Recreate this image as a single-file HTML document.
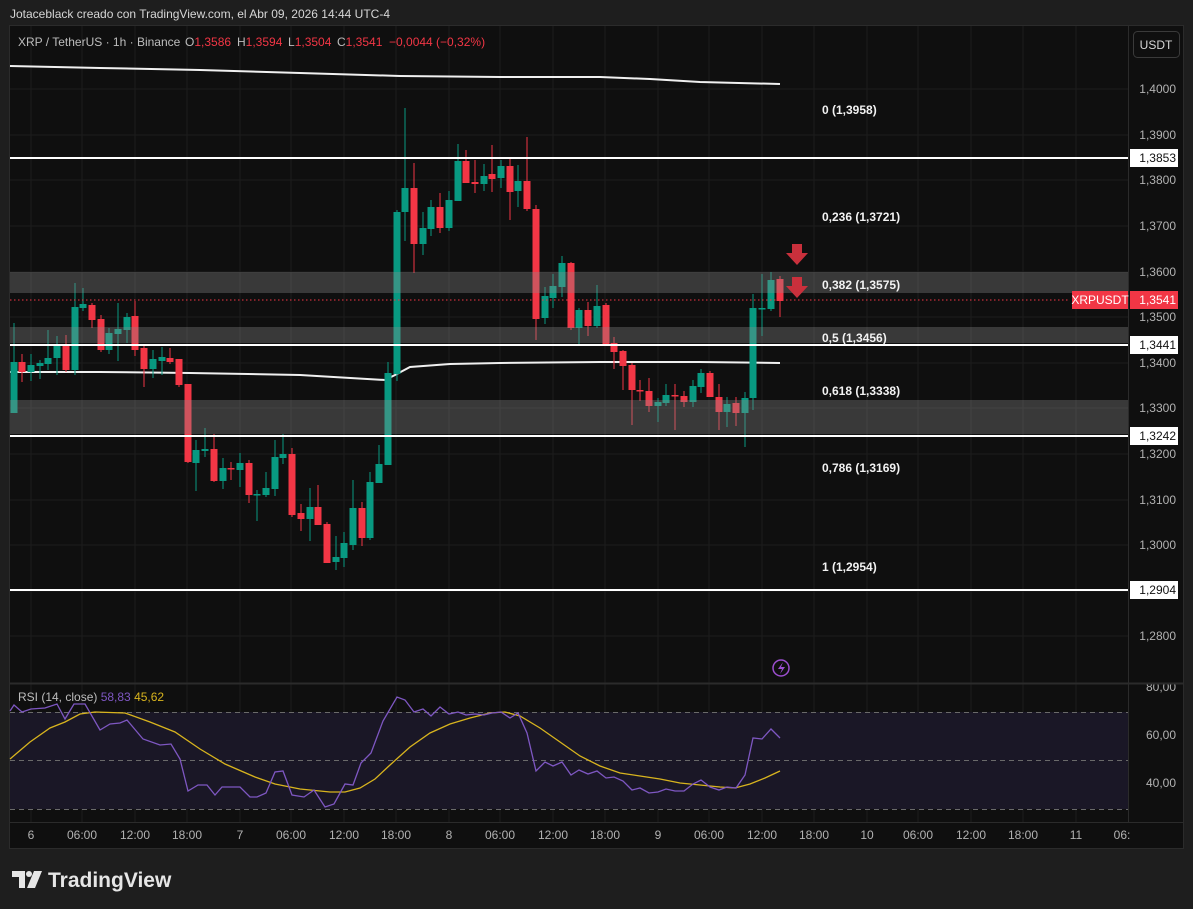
<!DOCTYPE html>
<html><head><meta charset="utf-8"><style>
html,body{margin:0;padding:0;background:#1e1e1e;width:1193px;height:909px;overflow:hidden}
svg{display:block}
text{font-family:"Liberation Sans",sans-serif}
</style></head><body>
<svg width="1193" height="909" viewBox="0 0 1193 909" xmlns="http://www.w3.org/2000/svg">
<rect width="1193" height="909" fill="#1e1e1e"/>
<text x="10" y="18" font-size="12" fill="#d6d6d6">Jotaceblack creado con TradingView.com, el Abr 09, 2026 14:44 UTC-4</text>
<rect x="9.5" y="25.5" width="1174" height="823" fill="#0f0f0f" stroke="#2b2b2b"/>
<g stroke="#1c1c1c" stroke-width="1">
<path d="M10 89H1128M10 135H1128M10 180H1128M10 226H1128M10 272H1128M10 317H1128M10 363H1128M10 408H1128M10 454H1128M10 500H1128M10 545H1128M10 591H1128M10 636H1128M10 735H1128M10 783H1128"/>
<path d="M31 26V822M82 26V822M135 26V822M187 26V822M240 26V822M291 26V822M344 26V822M396 26V822M449 26V822M500 26V822M553 26V822M605 26V822M658 26V822M709 26V822M762 26V822M814 26V822M867 26V822M918 26V822M971 26V822M1023 26V822M1076 26V822"/>
</g>
<path d="M10 66L100 68L200 70L300 73L400 76L500 77L600 77L650 79L700 82L780 84" stroke="#f0f0f0" stroke-width="2" fill="none"/>
<path d="M10 372L100 372L190 373L300 375L385 380L395 375L410 367L450 364L500 363L600 362L700 362L780 363" stroke="#f0f0f0" stroke-width="2" fill="none"/>
<g stroke="#089981" stroke-width="1" fill="none">
<path d="M14 323V413M31 354V381M40 360V379M48 330V370M57 336V375M75 283V375M83 288V311M109 328V354M118 303V361M127 313V343M153 350V378M162 347V375M196 440V491M205 428V457M223 458V489M240 453V487M257 490V521M266 472V497M275 440V496M283 434V464M310 488V541M336 536V570M344 532V567M353 480V550M370 472V540M379 445V483M388 362V465M397 210V381M405 108V241M423 212V255M431 200V236M449 191V231M458 144V201M484 164V191M501 160V188M518 165V207M545 287V324M553 274V308M562 256V297M579 308V345M597 285V328M658 398V422M666 384V406M693 380V407M701 369V393M727 397V427M745 392V447M753 294V410M762 274V336M771 272V311"/>
</g>
<path fill="#089981" d="M10.5 362h7v51h-7zM27.5 365h7v7h-7zM36.5 363h7v3h-7zM44.5 358h7v6h-7zM53.5 346h7v12h-7zM71.5 307h7v63h-7zM79.5 304h7v4h-7zM105.5 333h7v17h-7zM114.5 329h7v5h-7zM123.5 317h7v13h-7zM149.5 359h7v10h-7zM158.5 357h7v4h-7zM192.5 450h7v13h-7zM201.5 449h7v2h-7zM219.5 468h7v13h-7zM236.5 463h7v7h-7zM253.5 494h7v1.5h-7zM262.5 488h7v7h-7zM271.5 457h7v32h-7zM279.5 454h7v4h-7zM306.5 507h7v12h-7zM332.5 557h7v5h-7zM340.5 543h7v15h-7zM349.5 508h7v37h-7zM366.5 482h7v56h-7zM375.5 464h7v19h-7zM384.5 373h7v92h-7zM393.5 212h7v162h-7zM401.5 188h7v24h-7zM419.5 228h7v16h-7zM427.5 207h7v22h-7zM445.5 200h7v28h-7zM454.5 161h7v40h-7zM480.5 176h7v8h-7zM497.5 166h7v12h-7zM514.5 181h7v10h-7zM541.5 296h7v22h-7zM549.5 286h7v12h-7zM558.5 263h7v24h-7zM575.5 310h7v18h-7zM593.5 306h7v20h-7zM654.5 402h7v4h-7zM662.5 395h7v8h-7zM689.5 386h7v16h-7zM697.5 373h7v14h-7zM723.5 404h7v8h-7zM741.5 398h7v15h-7zM749.5 308h7v90h-7zM758.5 308h7v1.5h-7zM767.5 280h7v29h-7z"/>
<g stroke="#f23645" stroke-width="1" fill="none">
<path d="M22 354V382M66 335V372M92 303V328M101 315V352M135 301V356M144 346V387M170 348V364M179 359V387M188 384V463M214 434V482M231 462V480M249 460V503M292 448V517M301 504V531M318 485V525M327 522V563M362 502V546M414 163V273M440 193V233M466 150V183M475 160V193M492 145V192M510 159V220M527 137V211M536 205V340M571 262V330M588 302V336M606 303V344M614 337V369M623 350V390M632 363V425M640 380V401M649 378V412M675 384V430M684 391V407M710 371V397M719 384V430M736 397V426M780 276V317"/>
</g>
<path fill="#f23645" d="M18.5 362h7v10h-7zM62.5 346h7v24h-7zM88.5 305h7v15h-7zM97.5 319h7v31h-7zM131.5 316h7v34h-7zM140.5 348h7v21h-7zM166.5 358h7v4h-7zM175.5 359h7v26h-7zM184.5 384h7v78h-7zM210.5 449h7v32h-7zM227.5 468h7v1.5h-7zM245.5 463h7v32h-7zM288.5 454h7v61h-7zM297.5 513h7v6h-7zM314.5 507h7v18h-7zM323.5 524h7v39h-7zM358.5 508h7v30h-7zM410.5 188h7v56h-7zM436.5 207h7v21h-7zM462.5 161h7v22h-7zM471.5 182h7v2h-7zM488.5 174h7v5h-7zM506.5 166h7v26h-7zM523.5 181h7v28h-7zM532.5 209h7v110h-7zM567.5 263h7v65h-7zM584.5 310h7v16h-7zM602.5 305h7v39h-7zM610.5 343h7v9h-7zM619.5 351h7v15h-7zM628.5 365h7v25h-7zM636.5 390h7v1.5h-7zM645.5 391h7v15h-7zM671.5 395h7v1.5h-7zM680.5 396h7v6h-7zM706.5 373h7v24h-7zM715.5 397h7v15h-7zM732.5 403h7v10h-7zM776.5 279h7v22h-7z"/>
<g fill="rgba(140,140,140,0.34)">
<rect x="10" y="272" width="1118" height="21"/>
<rect x="10" y="327" width="1118" height="16"/>
<rect x="10" y="400" width="1118" height="34"/>
</g>
<g stroke="#ffffff" stroke-width="2">
<path d="M10 158H1128M10 345H1128M10 436H1128M10 590H1128"/>
</g>
<path d="M10 300H1070" stroke="#f23645" stroke-width="1" stroke-dasharray="1.5 2.5"/>
<g fill="#c9303c">
<path d="M792 244h10v9h6l-11 12l-11-12h6z"/>
<path d="M792 277h10v9h6l-11 12l-11-12h6z"/>
</g>
<g font-size="12" font-weight="bold" fill="#f2f2f2">
<text x="822" y="114">0 (1,3958)</text>
<text x="822" y="221">0,236 (1,3721)</text>
<text x="822" y="289">0,382 (1,3575)</text>
<text x="822" y="342">0,5 (1,3456)</text>
<text x="822" y="395">0,618 (1,3338)</text>
<text x="822" y="472">0,786 (1,3169)</text>
<text x="822" y="571">1 (1,2954)</text>
</g>
<text y="46" font-size="12" fill="#bdbdbd"><tspan x="18">XRP / TetherUS · 1h · Binance</tspan><tspan x="185">O</tspan><tspan fill="#f23645">1,3586</tspan><tspan x="237">H</tspan><tspan fill="#f23645">1,3594</tspan><tspan x="288">L</tspan><tspan fill="#f23645">1,3504</tspan><tspan x="337">C</tspan><tspan fill="#f23645">1,3541</tspan><tspan x="389" fill="#f23645">−0,0044 (−0,32%)</tspan></text>
<path d="M1128.5 26V822" stroke="#2b2b2b"/>
<rect x="1133.5" y="31.5" width="46" height="26" rx="4" fill="#0f0f0f" stroke="#3a3a3a"/>
<text x="1156" y="49" font-size="12" fill="#d6d6d6" text-anchor="middle">USDT</text>
<g font-size="12" fill="#b2b2b2" text-anchor="end">
<text x="1176" y="93">1,4000</text>
<text x="1176" y="139">1,3900</text>
<text x="1176" y="184">1,3800</text>
<text x="1176" y="230">1,3700</text>
<text x="1176" y="276">1,3600</text>
<text x="1176" y="321">1,3500</text>
<text x="1176" y="367">1,3400</text>
<text x="1176" y="412">1,3300</text>
<text x="1176" y="458">1,3200</text>
<text x="1176" y="504">1,3100</text>
<text x="1176" y="549">1,3000</text>
<text x="1176" y="640">1,2800</text>
<text x="1176" y="691">80,00</text>
<text x="1176" y="739">60,00</text>
<text x="1176" y="787">40,00</text>
</g>
<g fill="#ffffff">
<rect x="1130" y="149" width="48" height="18"/>
<rect x="1130" y="336" width="48" height="18"/>
<rect x="1130" y="427" width="48" height="18"/>
<rect x="1130" y="581" width="48" height="18"/>
</g>
<g font-size="12" fill="#111" text-anchor="end">
<text x="1176" y="162">1,3853</text>
<text x="1176" y="349">1,3441</text>
<text x="1176" y="440">1,3242</text>
<text x="1176" y="594">1,2904</text>
</g>
<rect x="1072" y="291" width="56" height="18" fill="#f23645"/>
<text x="1100" y="304" font-size="12" fill="#fff" text-anchor="middle">XRPUSDT</text>
<rect x="1130" y="291" width="48" height="18" fill="#f23645"/>
<text x="1176" y="304" font-size="12" fill="#fff" text-anchor="end">1,3541</text>
<circle cx="781" cy="668" r="8" fill="none" stroke="#9c4fd0" stroke-width="1.5"/>
<path d="M783 662l-5 7h4l-2 5l5-7h-4z" fill="#9c4fd0"/>
<path d="M10 683.5H1183" stroke="#2b2b2b" stroke-width="2"/>
<rect x="10" y="712" width="1118" height="97" fill="#1a1726"/>
<g stroke="#6a6a6a" stroke-dasharray="5 4" stroke-width="1">
<path d="M10 712.5H1128M10 760.5H1128M10 809.5H1128"/>
</g>
<polyline fill="none" stroke="#d8b41e" stroke-width="1.3" points="10,759 30,742 50,728 65,722 80,714 95,712 125,713 150,722 175,732 200,749 225,764 255,777 275,784 300,789 330,792 345,792 360,788 375,779 390,765 410,747 430,733 450,724 470,718 490,713 505,712 520,716 540,728 560,742 580,756 600,766 620,773 640,776 660,779 680,783 700,785 720,787 735,788 750,784 765,778 780,771"/>
<polyline fill="none" stroke="#7e57c2" stroke-width="1.3" points="10,711 14,705 22,712 31,709 45,708 57,704 65,719 74,704 85,704 100,730 110,724 120,723 127,720 143,739 160,745 171,744 180,759 188,791 198,785 207,785 215,795 222,787 240,787 250,797 257,797 266,793 275,772 283,771 292,795 304,797 314,790 325,807 334,804 345,784 353,785 361,763 371,753 383,721 397,697 405,700 414,712 423,709 431,716 440,707 449,714 458,712 466,715 475,714 484,715 492,713 501,712 510,718 518,713 527,733 536,771 545,762 553,766 562,762 571,775 579,770 588,774 597,771 606,778 614,777 623,781 632,790 640,788 649,793 658,792 666,789 675,791 684,791 693,784 701,780 710,787 719,790 727,787 736,788 745,775 753,738 762,739 771,729 780,738"/>
<text x="18" y="701" font-size="12" fill="#bdbdbd">RSI (14, close) <tspan fill="#7e57c2">58,83</tspan> <tspan fill="#d8b41e">45,62</tspan></text>
<path d="M10 822.5H1183" stroke="#2b2b2b"/>
<g font-size="12" fill="#b2b2b2" text-anchor="middle">
<text x="31" y="839">6</text><text x="82" y="839">06:00</text><text x="135" y="839">12:00</text><text x="187" y="839">18:00</text>
<text x="240" y="839">7</text><text x="291" y="839">06:00</text><text x="344" y="839">12:00</text><text x="396" y="839">18:00</text>
<text x="449" y="839">8</text><text x="500" y="839">06:00</text><text x="553" y="839">12:00</text><text x="605" y="839">18:00</text>
<text x="658" y="839">9</text><text x="709" y="839">06:00</text><text x="762" y="839">12:00</text><text x="814" y="839">18:00</text>
<text x="867" y="839">10</text><text x="918" y="839">06:00</text><text x="971" y="839">12:00</text><text x="1023" y="839">18:00</text>
<text x="1076" y="839">11</text><text x="1122" y="839">06:</text>
</g>
<g fill="#e6e6e6">
<path d="M12 871h13v17h-6v-11h-7z"/>
<circle cx="29" cy="874" r="3"/>
<path d="M34 871h8l-7 17h-8z"/>
</g>
<text x="48" y="887" font-size="21" font-weight="bold" fill="#e6e6e6">TradingView</text>
</svg>
</body></html>
